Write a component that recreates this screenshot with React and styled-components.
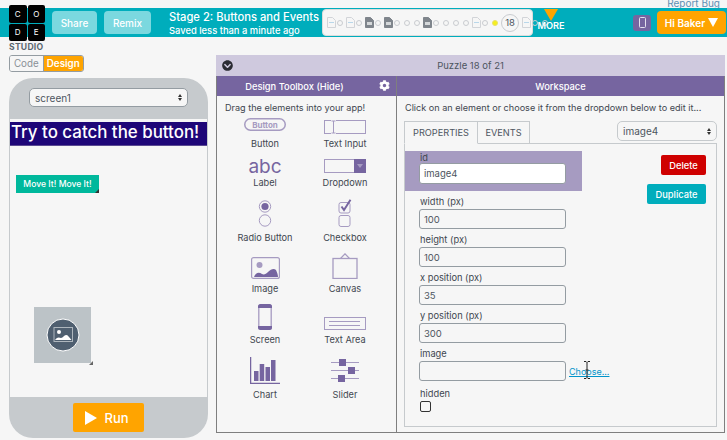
import React from 'react';
import styled, { createGlobalStyle } from 'styled-components';
import { FaChevronCircleDown, FaCog } from 'react-icons/fa';

const Global = createGlobalStyle`
  html, body {
    margin: 0;
    width: 727px;
    height: 440px;
    overflow: hidden;
    background: #f6f6f6;
    font-family: Inter, "Open Sans", sans-serif;
    color: #4d5560;
  }
  * { box-sizing: border-box; }
`;

const Page = styled.div`
  position: relative;
  width: 727px;
  height: 440px;
`;

const TopStrip = styled.div`
  height: 8px;
  line-height: 6px;
  padding-right: 7px;
  text-align: right;
  font-size: 10px;
  color: #5d8fb3;
  overflow: hidden;
`;

const Header = styled.header`
  height: 29px;
  background: #00adbc;
  display: flex;
  align-items: center;
  padding-left: 52px;
`;

const Logo = styled.div`
  position: absolute;
  left: 9px;
  top: 5px;
  width: 37px;
`;

const LogoGrid = styled.div`
  display: grid;
  grid-template-columns: 17.5px 17.5px;
  grid-auto-rows: 17.5px;
  gap: 1px;
`;

const LogoCell = styled.div`
  background: #000;
  border-radius: 2px;
  color: #fff;
  font-size: 8px;
  display: flex;
  align-items: center;
  justify-content: center;
`;

const LogoText = styled.div`
  font-size: 8.6px;
  font-weight: 700;
  color: #5b6770;
  letter-spacing: 0.25px;
  line-height: 10px;
  margin-top: 1px;
`;

const HeaderButton = styled.div`
  height: 23px;
  width: ${p => p.$w}px;
  margin-right: 7px;
  background: #7bd8df;
  border-radius: 4px;
  color: #fff;
  font-size: 10px;
  font-weight: 500;
  display: flex;
  align-items: center;
  justify-content: center;
`;

const Titles = styled.div`
  margin-left: 11px;
  width: 153px;
  color: #fff;
  white-space: nowrap;
`;

const Title = styled.div`
  font-size: 11.2px;
  font-weight: 500;
  line-height: 15px;
`;

const Subtitle = styled.div`
  font-size: 9.4px;
  font-weight: 500;
  line-height: 11px;
`;

const Progress = styled.div`
  width: 211px;
  height: 27px;
  background: #f6f6f6;
  border: 1px solid #dcdcdc;
  border-radius: 4px;
  display: flex;
  align-items: center;
  padding-left: 4px;
`;

const Dot = styled.span`
  width: 6px;
  height: 6px;
  margin: 0 3px 0 1px;
  border: 1px solid #c9ccd0;
  border-radius: 50%;
  flex: none;
  ${p => p.$current && 'background: #f5ee1c; border-color: #e8e26a;'}
`;

const Current = styled.span`
  width: 18px;
  height: 18px;
  margin-right: 3px;
  border: 1px solid #c9ccd0;
  border-radius: 50%;
  flex: none;
  font-size: 9.5px;
  color: #4d5560;
  display: flex;
  align-items: center;
  justify-content: center;
`;

const More = styled.div`
  align-self: flex-start;
  width: 30px;
  margin: 1px 0 0 3px;
  color: #fff;
  font-size: 9.2px;
  font-weight: 600;
  text-align: center;
  line-height: 9px;
`;

const MoreArrow = styled.div`
  width: 0;
  height: 0;
  margin: 0 auto;
  border-left: 7px solid transparent;
  border-right: 7px solid transparent;
  border-top: 12px solid #ffa400;
`;

const PhoneButton = styled.div`
  width: 18px;
  height: 16px;
  margin-left: 67px;
  background: #7665a0;
  border-radius: 3px;
  display: flex;
  align-items: center;
  justify-content: center;
`;

const UserButton = styled.div`
  width: 69px;
  height: 23px;
  margin-left: 6px;
  background: #ffa400;
  border-radius: 4px;
  color: #fff;
  font-size: 10px;
  font-weight: 600;
  display: flex;
  align-items: center;
  justify-content: center;
  gap: 3px;
`;

const UserArrow = styled.span`
  border-left: 5px solid transparent;
  border-right: 5px solid transparent;
  border-top: 9px solid #fff;
`;

const Main = styled.main`
  display: flex;
  margin-top: 18px;
  padding-left: 9px;
`;

const LeftColumn = styled.div`
  width: 199px;
  margin-right: 8px;
`;

const Toggle = styled.div`
  display: flex;
  width: 75px;
  height: 17px;
  margin-bottom: 6px;
  border: 1px solid #949ca2;
  border-radius: 3px;
  overflow: hidden;
`;

const ToggleItem = styled.div`
  display: flex;
  align-items: center;
  justify-content: center;
  font-size: 9.8px;
  width: ${p => (p.$active ? 41 : 33)}px;
  color: ${p => (p.$active ? '#fff' : '#8a9097')};
  font-weight: ${p => (p.$active ? 600 : 400)};
  background: ${p => (p.$active ? '#ffa400' : '#f6f6f6')};
  border-left: ${p => (p.$active ? '1px solid #949ca2' : 'none')};
`;

const PhoneFrame = styled.div`
  height: 360px;
  border-radius: 24px;
  background: #c6cacd;
  display: flex;
  flex-direction: column;
  overflow: hidden;
`;

const PhoneTop = styled.div`
  height: 41px;
  flex: none;
  padding: 10px 20px 0;
`;

const Select = styled.div`
  height: ${p => p.$h}px;
  width: ${p => p.$w || 'auto'};
  background: #f6f6f6;
  border: 1px solid ${p => (p.$light ? '#c6cacd' : '#949ca2')};
  border-radius: 5px;
  padding: 0 5px;
  display: flex;
  align-items: center;
  justify-content: space-between;
  font-size: 10px;
  color: #4d5560;
`;

const SelectArrows = styled.span`
  display: flex;
  flex-direction: column;
  gap: 1px;
  &::before, &::after {
    content: '';
    border-left: 2.5px solid transparent;
    border-right: 2.5px solid transparent;
  }
  &::before { border-bottom: 3px solid #333; }
  &::after { border-top: 3px solid #333; }
`;

const AppCanvas = styled.div`
  position: relative;
  flex: 1;
  margin: 0 1px;
  background: #f6f6f6;
`;

const CanvasLabel = styled.div`
  position: absolute;
  left: 0;
  top: 3px;
  width: 197px;
  height: 24px;
  padding-left: 1px;
  background: #1e0678;
  border-bottom: 1px solid #5b4a92;
  color: #fff;
  font-size: 16.9px;
  font-weight: 500;
  line-height: 21px;
  white-space: nowrap;
`;

const CanvasButton = styled.div`
  position: absolute;
  left: 6px;
  top: 56px;
  width: 83px;
  height: 18px;
  background: #00b89c;
  color: #fff;
  font-size: 8.6px;
  font-weight: 500;
  display: flex;
  align-items: center;
  justify-content: center;
`;

const CanvasImage = styled.div`
  position: absolute;
  left: 24px;
  top: 188px;
  width: 57px;
  height: 56px;
  background: #bcc3c7;
  display: flex;
  align-items: center;
  justify-content: center;
`;

const ResizeHandle = styled.span`
  position: absolute;
  right: ${p => p.$o}px;
  bottom: ${p => p.$o}px;
  width: 0;
  height: 0;
  border-left: 4px solid transparent;
  border-bottom: 4px solid ${p => p.$c};
`;

const PhoneBottom = styled.div`
  height: 41px;
  flex: none;
  padding-top: 6px;
  display: flex;
  justify-content: center;
`;

const RunButton = styled.div`
  width: 71px;
  height: 29px;
  margin-right: 1px;
  background: #ffa400;
  border-radius: 2px;
  color: #fff;
  font-size: 13px;
  font-weight: 500;
  display: flex;
  align-items: center;
  justify-content: center;
  gap: 7px;
  padding-right: 2px;
`;

const RunArrow = styled.span`
  border-top: 7px solid transparent;
  border-bottom: 7px solid transparent;
  border-left: 12px solid #fff;
`;

const Panel = styled.div`
  width: 509px;
  height: 378px;
  border-left: 1px solid #7f7f7f;
  border-right: 1px solid #7f7f7f;
  border-bottom: 1px solid #7f7f7f;
  display: flex;
  flex-direction: column;
`;

const PuzzleBar = styled.div`
  position: relative;
  height: 21px;
  margin: 0 -1px;
  flex: none;
  background: #cfc9de;
  font-size: 9.5px;
  color: #4d5560;
  display: flex;
  align-items: center;
  justify-content: center;
  svg {
    position: absolute;
    left: 6px;
    top: 5px;
    color: #2b2b33;
  }
`;

const Columns = styled.div`
  flex: 1;
  display: flex;
  min-height: 0;
`;

const Toolbox = styled.section`
  width: 180px;
  flex: none;
  border-right: 1px solid #7f7f7f;
`;

const Workspace = styled.section`
  flex: 1;
`;

const PanelHead = styled.div`
  position: relative;
  height: 20px;
  background: #7665a0;
  color: #fff;
  font-size: 9.3px;
  font-weight: 500;
  display: flex;
  align-items: center;
  justify-content: center;
  padding-right: ${p => (p.$tool ? 24 : 0)}px;
  svg {
    position: absolute;
    right: 6px;
    top: 4px;
  }
`;

const Hint = styled.div`
  height: 22px;
  padding: 5px 0 0 8px;
  font-size: 9.1px;
  line-height: 13px;
  color: #3f4750;
  white-space: nowrap;
`;

const ToolGrid = styled.div`
  display: grid;
  grid-template-columns: 80px 80px;
  grid-template-rows: 33px 39px 55px 51px 51px 55px;
  margin-left: 8px;
`;

const Tool = styled.div`
  display: flex;
  flex-direction: column;
  align-items: center;
  justify-content: flex-end;
  gap: ${p => p.$gap || 3}px;
  font-size: 9.2px;
  line-height: 14px;
  color: #3f4750;
  white-space: nowrap;
`;

const LabelGlyph = styled.span`
  font-size: 19px;
  line-height: 17px;
  color: #7665a0;
`;

const WorkHead = styled.div`
  display: flex;
  justify-content: space-between;
  align-items: flex-start;
  margin: 3px 7px 0 7px;
`;

const Tabs = styled.div`
  display: flex;
`;

const Tab = styled.div`
  height: 23px;
  width: ${p => p.$w}px;
  margin-bottom: -1px;
  border: 1px solid #c6cacd;
  border-left-width: ${p => (p.$first ? 1 : 0)}px;
  border-bottom-color: ${p => (p.$active ? '#f6f6f6' : '#c6cacd')};
  position: relative;
  font-size: 9.2px;
  color: #4d5560;
  display: flex;
  align-items: center;
  justify-content: center;
`;

const PropertyBox = styled.div`
  height: 284px;
  margin: 0 7px;
  border: 1px solid #c6cacd;
  display: flex;
  justify-content: space-between;
  padding-top: 7px;
`;

const Fields = styled.div`
  width: 177px;
`;

const Field = styled.div`
  padding: ${p => (p.$selected ? '0 0 7px 14px' : '0 0 4px 14px')};
  background: ${p => (p.$selected ? '#a69bc1' : 'transparent')};
  margin-bottom: ${p => (p.$selected ? 4 : 0)}px;
  margin-top: ${p => (p.$spaced ? 2 : 0)}px;
`;

const FieldLabel = styled.div`
  height: ${p => (p.$short ? 12 : 14)}px;
  padding-left: 1px;
  font-size: 9.3px;
  line-height: 13px;
  color: #3f4750;
`;

const InputRow = styled.div`
  display: flex;
  align-items: center;
`;

const Input = styled.div`
  width: 147px;
  height: ${p => (p.$white ? 21 : 20)}px;
  padding-left: 4px;
  background: ${p => (p.$white ? '#fff' : '#f6f6f6')};
  border: 1px solid #949ca2;
  border-radius: 3px;
  font-size: 9.5px;
  color: #4d5560;
  display: flex;
  align-items: center;
  flex: none;
`;

const ChooseLink = styled.span`
  position: relative;
  margin-left: 3px;
  font-size: 9px;
  color: #0094ca;
  text-decoration: underline;
  white-space: nowrap;
  svg {
    position: absolute;
    left: 14px;
    top: -5px;
  }
`;

const Checkbox = styled.div`
  width: 11px;
  height: 11px;
  margin-left: 1px;
  border: 1px solid #333;
  border-radius: 2px;
`;

const Actions = styled.div`
  width: 70px;
  margin-right: 10px;
  padding-top: 4px;
  display: flex;
  flex-direction: column;
  align-items: flex-end;
  gap: 9px;
`;

const ActionButton = styled.div`
  width: ${p => p.$w}px;
  height: ${p => p.$h}px;
  background: ${p => p.$bg};
  border-radius: 2px;
  color: #fff;
  font-size: 9.3px;
  font-weight: 500;
  display: flex;
  align-items: center;
  justify-content: center;
`;

const Doc = ({ filled }) => (
  <svg width="9" height="11" viewBox="0 0 9 11" style={{ flex: 'none' }}>
    <path
      d="M.5.5h5l3 3v7h-8z"
      fill={filled ? '#7f858c' : 'none'}
      stroke={filled ? '#7f858c' : '#d2d4d8'}
    />
    <rect x="2" y="5" width="5" height={filled ? 3 : 1} fill={filled ? '#d5d8da' : '#b9d7ea'} />
  </svg>
);

const steps = 'dcdcfcfcccfccccdcyTdcc'.split('');

const LevelBubbles = () =>
  steps.map((s, i) => {
    if (s === 'd') return <Doc key={i} />;
    if (s === 'f') return <Doc key={i} filled />;
    if (s === 'y') return <Dot key={i} $current />;
    if (s === 'T') return <Current key={i}>18</Current>;
    return <Dot key={i} />;
  });

const PURPLE = '#7665a0';
const LIGHT = '#a69bc1';

const ButtonIcon = () => (
  <svg width="42" height="13" viewBox="0 0 42 13">
    <rect x=".75" y=".75" width="40.5" height="11.5" rx="5.7" fill="none" stroke={LIGHT} strokeWidth="1.5" />
    <text x="21" y="9.6" textAnchor="middle" fontSize="8" fontWeight="700" fontFamily="Inter, sans-serif" fill={LIGHT}>Button</text>
  </svg>
);

const TextInputIcon = () => (
  <svg width="42" height="14" viewBox="0 0 42 14">
    <rect x=".5" y=".5" width="41" height="13" fill="none" stroke={LIGHT} />
    <rect x="7" y="0" width="5" height="14" fill="#f6f6f6" />
    <path d="M7.5 1h4M7.5 13h4M9.5 1v12" stroke={LIGHT} fill="none" />
  </svg>
);

const DropdownIcon = () => (
  <svg width="42" height="14" viewBox="0 0 42 14">
    <rect x=".5" y=".5" width="41" height="13" fill="none" stroke={LIGHT} />
    <rect x="30" y="0" width="12" height="14" fill={PURPLE} />
    <path d="M33 5h6l-3 4z" fill={LIGHT} />
  </svg>
);

const RadioIcon = () => (
  <svg width="14" height="27" viewBox="0 0 14 27">
    <circle cx="7" cy="6.5" r="5.7" fill="none" stroke={LIGHT} />
    <circle cx="7" cy="6.5" r="3.6" fill={PURPLE} />
    <circle cx="7" cy="20.5" r="5.7" fill="none" stroke={LIGHT} />
  </svg>
);

const CheckboxIcon = () => (
  <svg width="14" height="28" viewBox="0 0 14 28">
    <rect x="1" y="3.5" width="11" height="10.5" rx="2" fill="none" stroke={LIGHT} />
    <path d="M3.5 7.5l2.5 3.5L12.5 .8" fill="none" stroke={PURPLE} strokeWidth="2" />
    <rect x="1" y="16.5" width="11" height="11" rx="2" fill="none" stroke={LIGHT} />
  </svg>
);

const ImageIcon = () => (
  <svg width="29" height="22" viewBox="0 0 29 22">
    <rect x=".6" y=".6" width="27.8" height="20.8" rx="2" fill="none" stroke={LIGHT} strokeWidth="1.2" />
    <circle cx="8.5" cy="8" r="3" fill={LIGHT} />
    <path d="M3 20c2-5 5-5 8-3 2 1 4 0 6-2 3-3 6-4 8-2 1 2 2 5 2 7z" fill={PURPLE} />
  </svg>
);

const CanvasIcon = () => (
  <svg width="26" height="26" viewBox="0 0 26 26">
    <rect x="1" y="5.5" width="24" height="20" fill="none" stroke={LIGHT} strokeWidth="1.3" />
    <path d="M8.5 5.5L13 .8l4.500 4.700z" fill="none" stroke={LIGHT} strokeWidth="1.2" />
  </svg>
);

const ScreenIcon = () => (
  <svg width="14" height="26" viewBox="0 0 14 26">
    <rect x=".8" y=".8" width="12.400" height="24.400" rx="2" fill="none" stroke={LIGHT} strokeWidth="1.3" />
    <path d="M2.500 0h9a2.500 2.500 0 0 1 2.500 2.500V4H0V2.500A2.500 2.500 0 0 1 2.500 0zM0 22h14v1.500a2.500 2.500 0 0 1-2.500 2.500h-9A2.500 2.500 0 0 1 0 23.500z" fill={PURPLE} />
  </svg>
);

const TextAreaIcon = () => (
  <svg width="42" height="13" viewBox="0 0 42 13">
    <rect x=".5" y=".5" width="41" height="12" fill="none" stroke={LIGHT} />
    <path d="M5 4.500h31M5 8.500h31" stroke={LIGHT} strokeWidth="1" />
  </svg>
);

const ChartIcon = () => (
  <svg width="30" height="27" viewBox="0 0 30 27">
    <path d="M.6 0v26.400H30" fill="none" stroke={PURPLE} strokeWidth="1.300" />
    <path d="M4 14h4.500v10H4zM9.700 7h4.500v17H9.700zM15.500 10H20v14h-4.500zM21 3h4.500v21H21z" fill={PURPLE} />
  </svg>
);

const SliderIcon = () => (
  <svg width="30" height="25" viewBox="0 0 30 25">
    <path d="M1 3.500h28M1 11.500h28M1 19.500h28" stroke={LIGHT} strokeWidth="1.200" />
    <rect x="9" y="0" width="7" height="7" fill={PURPLE} />
    <rect x="18" y="8" width="7" height="7" fill={PURPLE} />
    <rect x="8" y="16" width="7" height="7" fill={PURPLE} />
  </svg>
);

const tools = [
  ['Button', <ButtonIcon />, 6],
  ['Text Input', <TextInputIcon />, 3],
  ['Label', <LabelGlyph>abc</LabelGlyph>, 1],
  ['Dropdown', <DropdownIcon />, 3],
  ['Radio Button', <RadioIcon />, 4],
  ['Checkbox', <CheckboxIcon />, 4],
  ['Image', <ImageIcon />, 3],
  ['Canvas', <CanvasIcon />, 3],
  ['Screen', <ScreenIcon />, 3],
  ['Text Area', <TextAreaIcon />, 3],
  ['Chart', <ChartIcon />, 4],
  ['Slider', <SliderIcon />, 4],
];

const fields = [
  ['width (px)', '100'],
  ['height (px)', '100'],
  ['x position (px)', '35'],
  ['y position (px)', '300'],
];

export default function App() {
  return (
    <Page>
      <Global />
      <TopStrip>Report Bug</TopStrip>
      <Logo>
        <LogoGrid>
          {['C', 'O', 'D', 'E'].map(l => (
            <LogoCell key={l}>{l}</LogoCell>
          ))}
        </LogoGrid>
        <LogoText>STUDIO</LogoText>
      </Logo>
      <Header>
        <HeaderButton $w={45}>Share</HeaderButton>
        <HeaderButton $w={47}>Remix</HeaderButton>
        <Titles>
          <Title>Stage 2: Buttons and Events</Title>
          <Subtitle>Saved less than a minute ago</Subtitle>
        </Titles>
        <Progress>
          <LevelBubbles />
        </Progress>
        <More>
          <MoreArrow />
          MORE
        </More>
        <PhoneButton>
          <svg width="7" height="11" viewBox="0 0 7 11">
            <rect x=".5" y=".5" width="6" height="10" rx="1" fill="none" stroke="#e4e1ee" />
          </svg>
        </PhoneButton>
        <UserButton>
          Hi Baker <UserArrow />
        </UserButton>
      </Header>
      <Main>
        <LeftColumn>
          <Toggle>
            <ToggleItem>Code</ToggleItem>
            <ToggleItem $active>Design</ToggleItem>
          </Toggle>
          <PhoneFrame>
            <PhoneTop>
              <Select $h={19}>
                screen1 <SelectArrows />
              </Select>
            </PhoneTop>
            <AppCanvas>
              <CanvasLabel>Try to catch the button!</CanvasLabel>
              <CanvasButton>
                Move It! Move It!
                <ResizeHandle $o={0} $c="#333" />
              </CanvasButton>
              <CanvasImage>
                <svg width="34" height="34" viewBox="0 0 34 34">
                  <circle cx="17" cy="17" r="16" fill="#4f5f70" stroke="#fff" />
                  <rect x="8" y="9.500" width="18.500" height="14" fill="none" stroke="#aeb6bd" />
                  <circle cx="13" cy="14" r="2" fill="#fff" />
                  <path d="M9 22c2-3 4-3 6-2 2 0 3-3 5-3s3 2 5.500 5z" fill="#fff" />
                </svg>
                <ResizeHandle $o={-2} $c="#666" />
              </CanvasImage>
            </AppCanvas>
            <PhoneBottom>
              <RunButton>
                <RunArrow />
                Run
              </RunButton>
            </PhoneBottom>
          </PhoneFrame>
        </LeftColumn>
        <Panel>
          <PuzzleBar>
            <FaChevronCircleDown size={11} />
            Puzzle 18 of 21
          </PuzzleBar>
          <Columns>
            <Toolbox>
              <PanelHead $tool>
                Design Toolbox (Hide)
                <FaCog size={11} />
              </PanelHead>
              <Hint>Drag the elements into your app!</Hint>
              <ToolGrid>
                {tools.map(([name, icon, gap]) => (
                  <Tool key={name} $gap={gap}>
                    {icon}
                    {name}
                  </Tool>
                ))}
              </ToolGrid>
            </Toolbox>
            <Workspace>
              <PanelHead>Workspace</PanelHead>
              <Hint>Click on an element or choose it from the dropdown below to edit it...</Hint>
              <WorkHead>
                <Tabs>
                  <Tab $first $active $w={74}>PROPERTIES</Tab>
                  <Tab $w={52}>EVENTS</Tab>
                </Tabs>
                <Select $h={20} $w="100px" $light>
                  image4 <SelectArrows />
                </Select>
              </WorkHead>
              <PropertyBox>
                <Fields>
                  <Field $selected>
                    <FieldLabel $short>id</FieldLabel>
                    <Input $white>image4</Input>
                  </Field>
                  {fields.map(([label, value]) => (
                    <Field key={label}>
                      <FieldLabel>{label}</FieldLabel>
                      <Input>{value}</Input>
                    </Field>
                  ))}
                  <Field>
                    <FieldLabel>image</FieldLabel>
                    <InputRow>
                      <Input />
                      <ChooseLink>
                        Choose...
                        <svg width="8" height="18" viewBox="0 0 8 18">
                          <path d="M1 .5h2l1 1 1-1h2M4 1.500v15M1 17.500h2l1-1 1 1h2M2.500 9h3" fill="none" stroke="#222" />
                        </svg>
                      </ChooseLink>
                    </InputRow>
                  </Field>
                  <Field $spaced>
                    <FieldLabel>hidden</FieldLabel>
                    <Checkbox />
                  </Field>
                </Fields>
                <Actions>
                  <ActionButton $w={45} $h={20} $bg="#cf0000">Delete</ActionButton>
                  <ActionButton $w={59} $h={20} $bg="#00adbc">Duplicate</ActionButton>
                </Actions>
              </PropertyBox>
            </Workspace>
          </Columns>
        </Panel>
      </Main>
    </Page>
  );
}
